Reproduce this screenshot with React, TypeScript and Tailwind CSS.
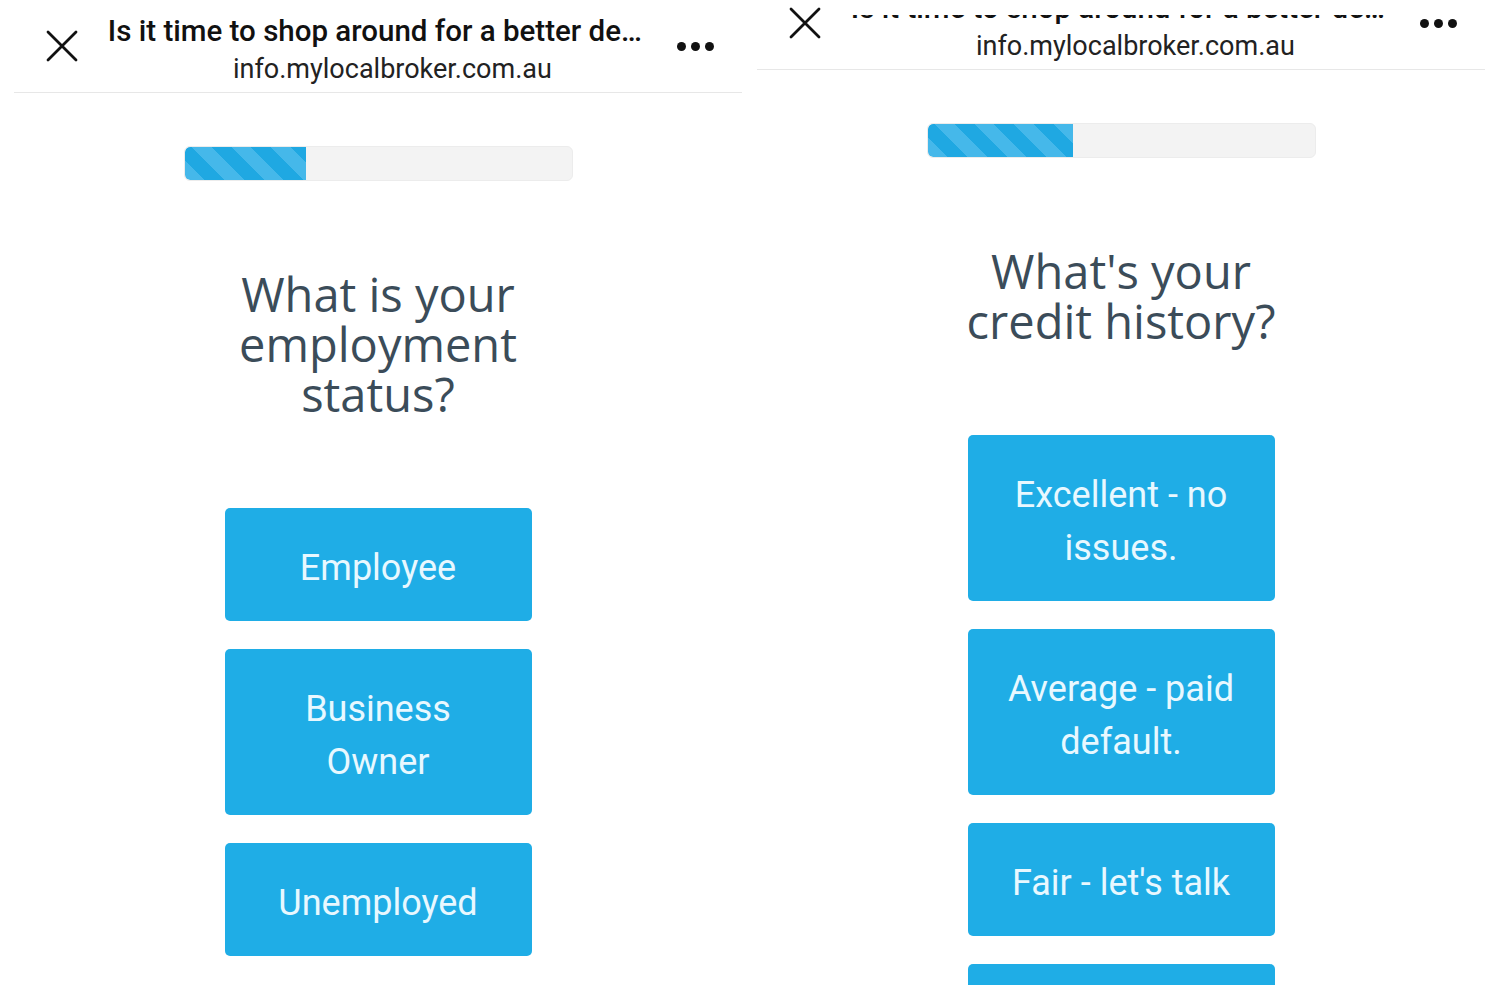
interface PanelProps {
  shift: string;
  titleClip: string;
  progress: number;
  question: string[];
  options: string[][];
}

const TITLE = 'Is it time to shop around for a better de…';
const URL = 'info.mylocalbroker.com.au';

function CloseIcon() {
  return (
    <svg width="32" height="32" viewBox="0 0 32 32" fill="none" stroke="#111" strokeWidth="2.8" strokeLinecap="round">
      <path d="M2 2 L30 30 M30 2 L2 30" />
    </svg>
  );
}

function Dots() {
  return (
    <div className="flex items-center gap-[5px]">
      <span className="h-[9px] w-[9px] rounded-full bg-[#111]" />
      <span className="h-[9px] w-[9px] rounded-full bg-[#111]" />
      <span className="h-[9px] w-[9px] rounded-full bg-[#111]" />
    </div>
  );
}

function QuizPanel({ shift, titleClip, progress, question, options }: PanelProps) {
  return (
    <div className="h-[985px] w-[728px] shrink-0 overflow-hidden">
      <div className={`flex flex-col items-center ${shift}`}>
        <header className="flex h-[93px] w-full items-center border-b border-[#e7e7e7] font-['Roboto',sans-serif]">
          <div className="flex w-[94px] justify-center pl-[2px]">
            <CloseIcon />
          </div>
          <div className="flex w-[570px] flex-col pt-[8px]">
            <div className={`whitespace-nowrap text-[29.5px] font-medium leading-[36px] text-[#111] ${titleClip}`}>
              {TITLE}
            </div>
            <div className="mt-[2px] text-center text-[27px] leading-[36px] text-[#222]">{URL}</div>
          </div>
          <div className="flex flex-1 justify-center pr-[28px]">
            <Dots />
          </div>
        </header>

        <div className="mt-[53px] h-[35px] w-[389px] overflow-hidden rounded-[6px] border border-[#ececec] bg-[#f3f3f3]">
          <div
            className="h-full rounded-l-[5px] bg-[image:repeating-linear-gradient(45deg,#45b8ea_0px,#45b8ea_14px,#1fa8e2_14px,#1fa8e2_28px)]"
            style={{ width: `${progress}%` }}
          />
        </div>

        <h1 className="mt-[88px] text-center font-['Open_Sans',sans-serif] text-[47px] leading-[50px] text-[#3b4c59]">
          {question.map((line) => (
            <div key={line}>{line}</div>
          ))}
        </h1>

        <div className="mt-[89px] flex flex-col gap-[28px]">
          {options.map((lines) => (
            <button
              key={lines.join(' ')}
              className="w-[307px] rounded-[5px] bg-[#1fade6] pb-[26px] pt-[34px] text-center font-['Roboto',sans-serif] text-[36px] leading-[53px] text-[#e8f8ff]"
            >
              {lines.map((line) => (
                <div key={line}>{line}</div>
              ))}
            </button>
          ))}
        </div>
      </div>
    </div>
  );
}

export default function App() {
  return (
    <div className="flex h-[1000px] w-[1500px] gap-[15px] overflow-hidden bg-white px-[14px]">
      <QuizPanel
        shift="mt-0"
        titleClip=""
        progress={31.4}
        question={['What is your', 'employment', 'status?']}
        options={[['Employee'], ['Business', 'Owner'], ['Unemployed']]}
      />
      <QuizPanel
        shift="-mt-[23px]"
        titleClip="[clip-path:inset(25px_0_0_0)]"
        progress={37.5}
        question={["What's your", 'credit history?']}
        options={[
          ['Excellent - no', 'issues.'],
          ['Average - paid', 'default.'],
          ["Fair - let's talk"],
          ['Poor - had issues'],
        ]}
      />
    </div>
  );
}
